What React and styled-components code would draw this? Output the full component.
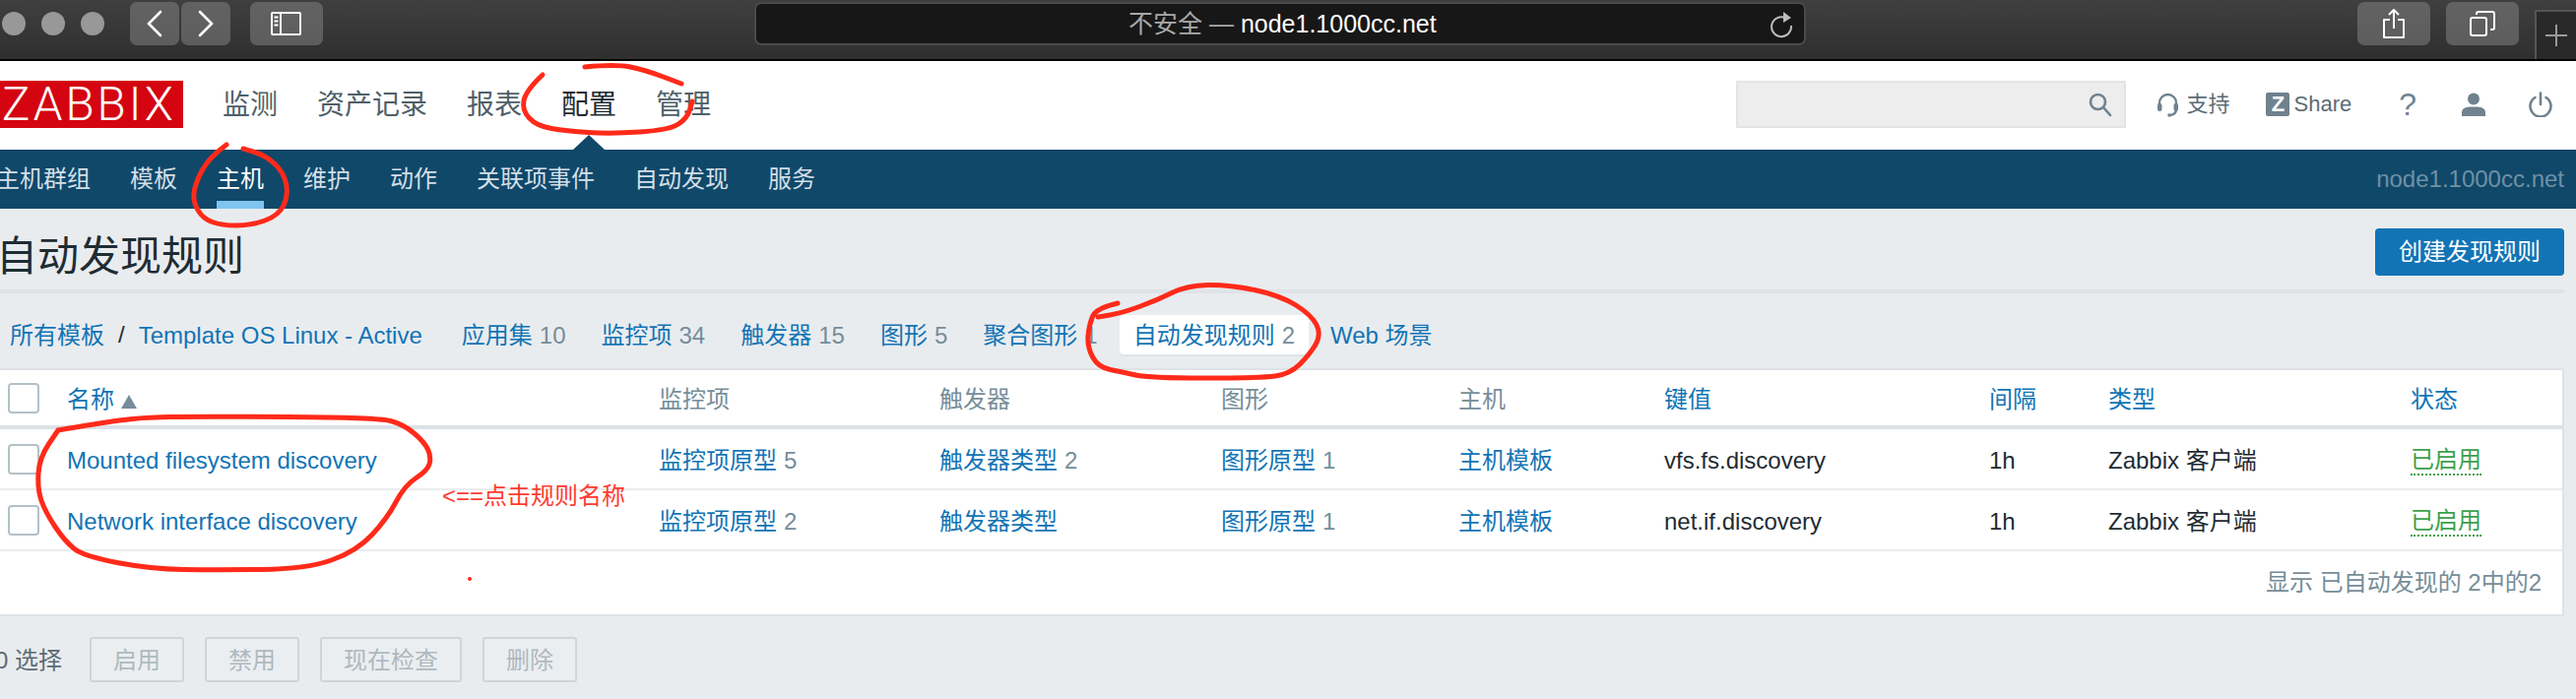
import React from 'react';
import styled, { createGlobalStyle } from 'styled-components';

const FONT = '"Liberation Sans", "Noto Sans CJK SC", sans-serif';
const BLUE = '#1274b5';
const GREY = '#768d99';
const DARK = '#1f2c33';
const NAVY = '#10486a';
const LINE = '#dfe3e7';
const RED = '#ff2a1a';

const COLUMNS = '68px 601px 285px 286px 241px 209px 330px 121px 307px 1fr';

const GlobalStyle = createGlobalStyle`
    html, body {
        margin: 0;
        padding: 0;
        width: 2616px;
        height: 710px;
        overflow: hidden;
        background: #e9ecef;
        font: 24px/28px ${FONT};
        color: ${DARK};
    }
    * {
        box-sizing: border-box;
    }
`;

const Page = styled.div`
    position: relative;
    width: 2616px;
    height: 710px;
    overflow: hidden;
`;

// browser chrome
const Toolbar = styled.div`
    display: flex;
    align-items: flex-start;
    height: 62px;
    padding: 2px 0 0 2px;
    background: linear-gradient(#3f3f3f, #2f2f2f);
    border-bottom: 2px solid #000;
`;
const Lights = styled.div`
    display: flex;
    flex: none;
    gap: 16px;
    margin: 10px 0 0 0;
`;
const Light = styled.span`
    flex: none;
    width: 24px;
    height: 24px;
    border-radius: 50%;
    background: #989898;
`;
const ToolButton = styled.div`
    display: flex;
    align-items: center;
    justify-content: center;
    flex: none;
    width: ${props => props.$w}px;
    height: 44px;
    margin-left: ${props => props.$ml}px;
    border-radius: 7px;
    background: linear-gradient(#626262, #5d5d5d);
`;
const UrlBar = styled.div`
    display: flex;
    align-items: center;
    flex: none;
    position: relative;
    width: 1068px;
    height: 44px;
    margin-left: 438px;
    padding-left: 378px;
    border: 2px solid #4a4a4a;
    border-radius: 7px;
    background: #171717;
    font-size: 25px;
    color: #fff;
    white-space: pre;
`;
const Insecure = styled.span`
    color: #a9a9a9;
`;
const Reload = styled.svg`
    position: absolute;
    right: 10px;
    top: 7px;
`;
const NewTab = styled.div`
    display: flex;
    align-items: center;
    justify-content: center;
    flex: none;
    width: 42px;
    height: 50px;
    margin: 8px 0 0 16px;
    background: #292929;
    border-top: 2px solid #555;
    border-left: 2px solid #555;
`;

// top menu
const Header = styled.div`
    display: flex;
    align-items: stretch;
    height: 90px;
    background: #fff;
`;
const Logo = styled.div`
    flex: none;
    align-self: flex-start;
    width: 186px;
    height: 48px;
    margin-top: 20px;
    padding-left: 2px;
    overflow: hidden;
    background: #d40511;
    color: #fff;
    font: 300 47.5px/48px Roboto, sans-serif;
    letter-spacing: 3px;
`;
const MainNav = styled.div`
    display: flex;
    gap: 40px;
    margin-left: 40px;
`;
const MainItem = styled.div`
    position: relative;
    display: flex;
    align-items: center;
    height: 90px;
    padding-bottom: 1px;
    font-size: 28px;
    color: ${props => (props.$active ? DARK : '#4f5f69')};
    ${props => props.$active && `
        &::after {
            content: '';
            position: absolute;
            left: 50%;
            bottom: 0;
            margin-left: -16px;
            border: solid transparent;
            border-width: 0 16px 15px;
            border-bottom-color: ${NAVY};
        }
    `}
`;
const Tools = styled.div`
    display: flex;
    align-items: center;
    margin-left: auto;
    padding: 0 24px 2px 0;
    color: #5b6b75;
`;
const SearchBox = styled.div`
    display: flex;
    align-items: center;
    justify-content: flex-end;
    width: 396px;
    height: 48px;
    padding-right: 11px;
    background: #ededed;
    border: 2px solid #e4e4e4;
`;
const ToolLink = styled.div`
    display: flex;
    align-items: center;
    gap: ${props => props.$gap || 0}px;
    margin-left: ${props => props.$ml}px;
    font-size: ${props => props.$size || 22}px;
    color: ${props => props.$color || 'inherit'};
`;
const ZMark = styled.span`
    display: flex;
    align-items: center;
    justify-content: center;
    width: 24px;
    height: 24px;
    border-radius: 2px;
    background: #6f828e;
    color: #fff;
    font-size: 22px;
    font-weight: 700;
`;

const SubNav = styled.div`
    display: flex;
    align-items: stretch;
    justify-content: space-between;
    height: 60px;
    padding: 0 12px 0 0;
    background: ${NAVY};
`;
const SubList = styled.div`
    display: flex;
    gap: 40px;
    margin-left: -4px;
`;
const SubItem = styled.div`
    position: relative;
    display: flex;
    align-items: center;
    font-size: 24px;
    color: ${props => (props.$active ? '#fff' : '#d3dfe6')};
    ${props => props.$active && `
        &::after {
            content: '';
            position: absolute;
            left: 0;
            right: 0;
            bottom: 0;
            height: 8px;
            background: #80c5f1;
        }
    `}
`;
const ServerName = styled.div`
    display: flex;
    align-items: center;
    color: #6f90a5;
`;

// page body
const Main = styled.div`
    padding-right: 12px;
`;
const TitleRow = styled.div`
    display: flex;
    align-items: flex-start;
    justify-content: space-between;
    height: 86px;
    padding-top: 20px;
    border-bottom: 4px solid ${LINE};
`;
const Title = styled.h1`
    margin: 3px 0 0 -4px;
    font-size: 42px;
    font-weight: 400;
    line-height: 52px;
    color: ${DARK};
`;
const CreateButton = styled.div`
    display: flex;
    align-items: center;
    justify-content: center;
    width: 192px;
    height: 48px;
    border-radius: 4px;
    background: ${BLUE};
    color: #fff;
`;
const Crumbs = styled.div`
    display: flex;
    align-items: center;
    gap: 8px;
    height: 76px;
    margin-left: -4px;
    padding-top: 8px;
`;
const CrumbGroup = styled.div`
    display: flex;
    align-items: center;
    margin-right: 4px;
`;
const Crumb = styled.div`
    display: flex;
    align-items: center;
    height: 40px;
    padding: 2px 14px 0;
    border-radius: 4px;
    color: ${BLUE};
    background: ${props => (props.$active ? '#fff' : 'transparent')};
    box-shadow: ${props => (props.$active ? `0 2px 0 ${LINE}` : 'none')};
`;
const Slash = styled.span`
    color: ${DARK};
`;
const Count = styled.span`
    margin-left: 7px;
    color: ${GREY};
`;

const Table = styled.div`
    background: #fff;
    border: solid ${LINE};
    border-width: 2px 2px 2px 0;
`;
const Row = styled.div`
    display: grid;
    grid-template-columns: ${COLUMNS};
    align-items: center;
    height: ${props => props.$height}px;
    border-bottom: ${props => props.$line}px solid ${props => (props.$line > 2 ? '#dde1e5' : '#e9ecef')};
`;
const CheckBox = styled.span`
    display: block;
    width: 32px;
    height: 31px;
    margin-left: 8px;
    border: 2px solid #b4c0c7;
    border-radius: 4px;
    background: #fff;
`;
const HeadCell = styled.div`
    display: flex;
    align-items: center;
    padding-top: 3px;
    color: ${props => (props.$link ? BLUE : GREY)};
`;
const SortArrow = styled.span`
    width: 0;
    height: 0;
    margin: 4px 0 0 7px;
    border: solid transparent;
    border-width: 0 8px 14px;
    border-bottom-color: ${GREY};
`;
const Cell = styled.div`
    padding-top: 3px;
    color: ${props => (props.$link ? BLUE : DARK)};
    white-space: nowrap;
`;
const Status = styled.span`
    display: inline-block;
    color: #3d9f4d;
    border-bottom: 2px dotted #3d9f4d;
`;
const Paging = styled.div`
    display: flex;
    align-items: center;
    justify-content: flex-end;
    height: 64px;
    padding-right: 21px;
    color: ${GREY};
`;
const Actions = styled.div`
    display: flex;
    align-items: center;
    gap: 21px;
    margin-top: 21px;
    margin-left: -5px;
`;
const Selected = styled.span`
    margin-right: 7px;
    padding-top: 2px;
    color: #5b6b75;
`;
const ActionButton = styled.div`
    display: flex;
    align-items: center;
    height: 46px;
    padding: 2px 22px 0;
    border: 2px solid #cfd5d9;
    border-radius: 3px;
    background: #ebeef0;
    color: #aeb9bf;
`;

// hand drawn marks over the page
const Marks = styled.svg`
    position: absolute;
    top: 0;
    left: 0;
    pointer-events: none;
`;
const Note = styled.div`
    position: absolute;
    left: 449px;
    top: 490px;
    color: #ff3b30;
`;

const smooth = (pts) => {
    let d = `M${pts[0][0]} ${pts[0][1]}`;
    for (let i = 1; i < pts.length - 1; i++) {
        const mx = (pts[i][0] + pts[i + 1][0]) / 2;
        const my = (pts[i][1] + pts[i + 1][1]) / 2;
        d += ` Q${pts[i][0]} ${pts[i][1]} ${mx} ${my}`;
    }
    const last = pts[pts.length - 1];
    return `${d} L${last[0]} ${last[1]}`;
};

const STROKES = [
    [[551, 76], [534, 92], [530, 112], [545, 128], [575, 133], [620, 136], [680, 132], [698, 120], [703, 103]],
    [[594, 68], [625, 65], [655, 71], [692, 85]],
    [[230, 147], [212, 160], [198, 187], [196, 205], [206, 222], [225, 229], [255, 229], [283, 219], [293, 198], [288, 175], [270, 158], [247, 151]],
    [[59, 437], [100, 430], [143, 424], [200, 423], [383, 424], [410, 431], [432, 450], [438, 465], [434, 478], [411, 493], [393, 527], [362, 560], [311, 578], [220, 579], [153, 578], [85, 565], [66, 550], [46, 520], [38, 497], [40, 465], [59, 437]],
    [[1135, 308], [1113, 313], [1106, 330], [1104, 352], [1115, 373], [1140, 378], [1167, 384], [1280, 384], [1310, 380], [1330, 360], [1342, 340], [1332, 320], [1300, 300], [1248, 289], [1205, 290], [1175, 305], [1139, 318], [1115, 322]],
];

const TOP_MENU = ['监测', '资产记录', '报表', '配置', '管理'];
const SUB_MENU = ['主机群组', '模板', '主机', '维护', '动作', '关联项事件', '自动发现', '服务'];
const TABS = [
    { name: '应用集', count: 10 },
    { name: '监控项', count: 34 },
    { name: '触发器', count: 15 },
    { name: '图形', count: 5 },
    { name: '聚合图形', count: 1 },
    { name: '自动发现规则', count: 2, active: true },
    { name: 'Web 场景' },
];
const HEADS = [
    { name: '监控项' }, { name: '触发器' }, { name: '图形' }, { name: '主机' },
    { name: '键值', link: true }, { name: '间隔', link: true }, { name: '类型', link: true }, { name: '状态', link: true },
];
const RULES = [
    { name: 'Mounted filesystem discovery', items: 5, triggers: 2, graphs: 1, key: 'vfs.fs.discovery' },
    { name: 'Network interface discovery', items: 2, graphs: 1, key: 'net.if.discovery' },
];

const Chevron = ({ d }) => (
    <svg width="20" height="30" viewBox="0 0 20 30" fill="none" stroke="#fff" strokeWidth="2.6" strokeLinecap="round">
        <path d={d} />
    </svg>
);

const App = () => (
    <Page>
        <GlobalStyle />
        <Toolbar>
            <Lights>
                <Light /><Light /><Light />
            </Lights>
            <ToolButton $w={50} $ml={26}><Chevron d="M16 3 L4 15 L16 27" /></ToolButton>
            <ToolButton $w={50} $ml={2}><Chevron d="M4 3 L16 15 L4 27" /></ToolButton>
            <ToolButton $w={74} $ml={20}>
                <svg width="32" height="24" viewBox="0 0 32 24" fill="none" stroke="#fff" strokeWidth="2">
                    <rect x="1" y="1" width="29" height="22" rx="1" />
                    <path d="M10 1 V23 M3.5 5.5 H7.5 M3.5 9.5 H7.5 M3.5 13.5 H7.5" />
                </svg>
            </ToolButton>
            <UrlBar>
                <Insecure>不安全 — </Insecure>node1.1000cc.net
                <Reload width="24" height="28" viewBox="0 0 24 28" fill="none" stroke="#bdbdbd" strokeWidth="2">
                    <path d="M15 7 A10 10 0 1 0 21 15" />
                    <path d="M13 1 L21 7 L13 12 Z" fill="#bdbdbd" stroke="none" />
                </Reload>
            </UrlBar>
            <ToolButton $w={74} $ml={560}>
                <svg width="24" height="32" viewBox="0 0 24 32" fill="none" stroke="#fff" strokeWidth="2" strokeLinejoin="round">
                    <path d="M8 12 H2 V30 H22 V12 H16 M12 21 V2 M7 7 L12 2 L17 7" />
                </svg>
            </ToolButton>
            <ToolButton $w={74} $ml={16}>
                <svg width="26" height="26" viewBox="0 0 26 26" fill="none" stroke="#fff" strokeWidth="2">
                    <rect x="1" y="7" width="16" height="18" rx="2" />
                    <path d="M7 4 V3 A2 2 0 0 1 9 1 H23 A2 2 0 0 1 25 3 V17 A2 2 0 0 1 23 19 H21" />
                </svg>
            </ToolButton>
            <NewTab>
                <svg width="24" height="24" viewBox="0 0 24 24" stroke="#9a9a9a" strokeWidth="2">
                    <path d="M12 1 V23 M1 12 H23" />
                </svg>
            </NewTab>
        </Toolbar>

        <Header>
            <Logo>ZABBIX</Logo>
            <MainNav>
                {TOP_MENU.map(name => <MainItem key={name} $active={name === '配置'}>{name}</MainItem>)}
            </MainNav>
            <Tools>
                <SearchBox>
                    <svg width="26" height="26" viewBox="0 0 26 26" fill="none" stroke="#6f828e" strokeWidth="2.6" strokeLinecap="round">
                        <circle cx="10.5" cy="10.5" r="7.5" />
                        <path d="M16 16 L23 24" />
                    </svg>
                </SearchBox>
                <ToolLink $ml={31} $gap={7}>
                    <svg width="23" height="25" viewBox="0 0 23 25" fill="none" stroke="#6f828e">
                        <path d="M3 13 V10.5 A8.5 8.5 0 0 1 20 10.5 V17 Q20 22 14 23" strokeWidth="2.4" />
                        <rect x="1" y="11" width="4.5" height="8" rx="2" fill="#6f828e" stroke="none" />
                        <rect x="17.5" y="11" width="4.5" height="8" rx="2" fill="#6f828e" stroke="none" />
                        <circle cx="13" cy="23" r="1.8" fill="#6f828e" stroke="none" />
                    </svg>
                    支持
                </ToolLink>
                <ToolLink $ml={37} $gap={4}>
                    <ZMark>Z</ZMark>
                    Share
                </ToolLink>
                <ToolLink $ml={48} $size={32} $color="#6f828e">?</ToolLink>
                <ToolLink $ml={46}>
                    <svg width="24" height="24" viewBox="0 0 24 24" fill="#6f828e">
                        <circle cx="12" cy="6.5" r="6" />
                        <path d="M0 24 V20 Q0 15 8 14.5 H16 Q24 15 24 20 V24 Z" />
                    </svg>
                </ToolLink>
                <ToolLink $ml={44}>
                    <svg width="24" height="26" viewBox="0 0 24 26" fill="none" stroke="#6f828e" strokeWidth="2.6" strokeLinecap="round">
                        <path d="M12 1.5 V13" />
                        <path d="M6.5 6 A10.5 10.5 0 1 0 17.5 6" />
                    </svg>
                </ToolLink>
            </Tools>
        </Header>

        <SubNav>
            <SubList>
                {SUB_MENU.map(name => <SubItem key={name} $active={name === '主机'}>{name}</SubItem>)}
            </SubList>
            <ServerName>node1.1000cc.net</ServerName>
        </SubNav>

        <Main>
            <TitleRow>
                <Title>自动发现规则</Title>
                <CreateButton>创建发现规则</CreateButton>
            </TitleRow>

            <Crumbs>
                <CrumbGroup>
                    <Crumb>所有模板</Crumb>
                    <Slash>/</Slash>
                    <Crumb>Template OS Linux - Active</Crumb>
                </CrumbGroup>
                {TABS.map(tab => (
                    <Crumb key={tab.name} $active={tab.active}>
                        {tab.name}
                        {tab.count && <Count>{tab.count}</Count>}
                    </Crumb>
                ))}
            </Crumbs>

            <Table>
                <Row $height={60} $line={4}>
                    <CheckBox />
                    <HeadCell $link>名称<SortArrow /></HeadCell>
                    {HEADS.map(head => <HeadCell key={head.name} $link={head.link}>{head.name}</HeadCell>)}
                </Row>
                {RULES.map(rule => (
                    <Row key={rule.name} $height={62} $line={2}>
                        <CheckBox />
                        <Cell $link>{rule.name}</Cell>
                        <Cell $link>监控项原型<Count>{rule.items}</Count></Cell>
                        <Cell $link>触发器类型{rule.triggers && <Count>{rule.triggers}</Count>}</Cell>
                        <Cell $link>图形原型<Count>{rule.graphs}</Count></Cell>
                        <Cell $link>主机模板</Cell>
                        <Cell>{rule.key}</Cell>
                        <Cell>1h</Cell>
                        <Cell>Zabbix 客户端</Cell>
                        <Cell><Status>已启用</Status></Cell>
                    </Row>
                ))}
                <Paging>显示 已自动发现的 2中的2</Paging>
            </Table>

            <Actions>
                <Selected>0 选择</Selected>
                <ActionButton>启用</ActionButton>
                <ActionButton>禁用</ActionButton>
                <ActionButton>现在检查</ActionButton>
                <ActionButton>删除</ActionButton>
            </Actions>
        </Main>

        <Marks width="2616" height="710" viewBox="0 0 2616 710" fill="none" stroke={RED} strokeWidth="5" strokeLinecap="round" strokeLinejoin="round">
            {STROKES.map((pts, index) => <path key={index} d={smooth(pts)} />)}
            <circle cx="477" cy="588" r="2" fill={RED} stroke="none" />
        </Marks>
        <Note>&lt;==点击规则名称</Note>
    </Page>
);

export default App;
